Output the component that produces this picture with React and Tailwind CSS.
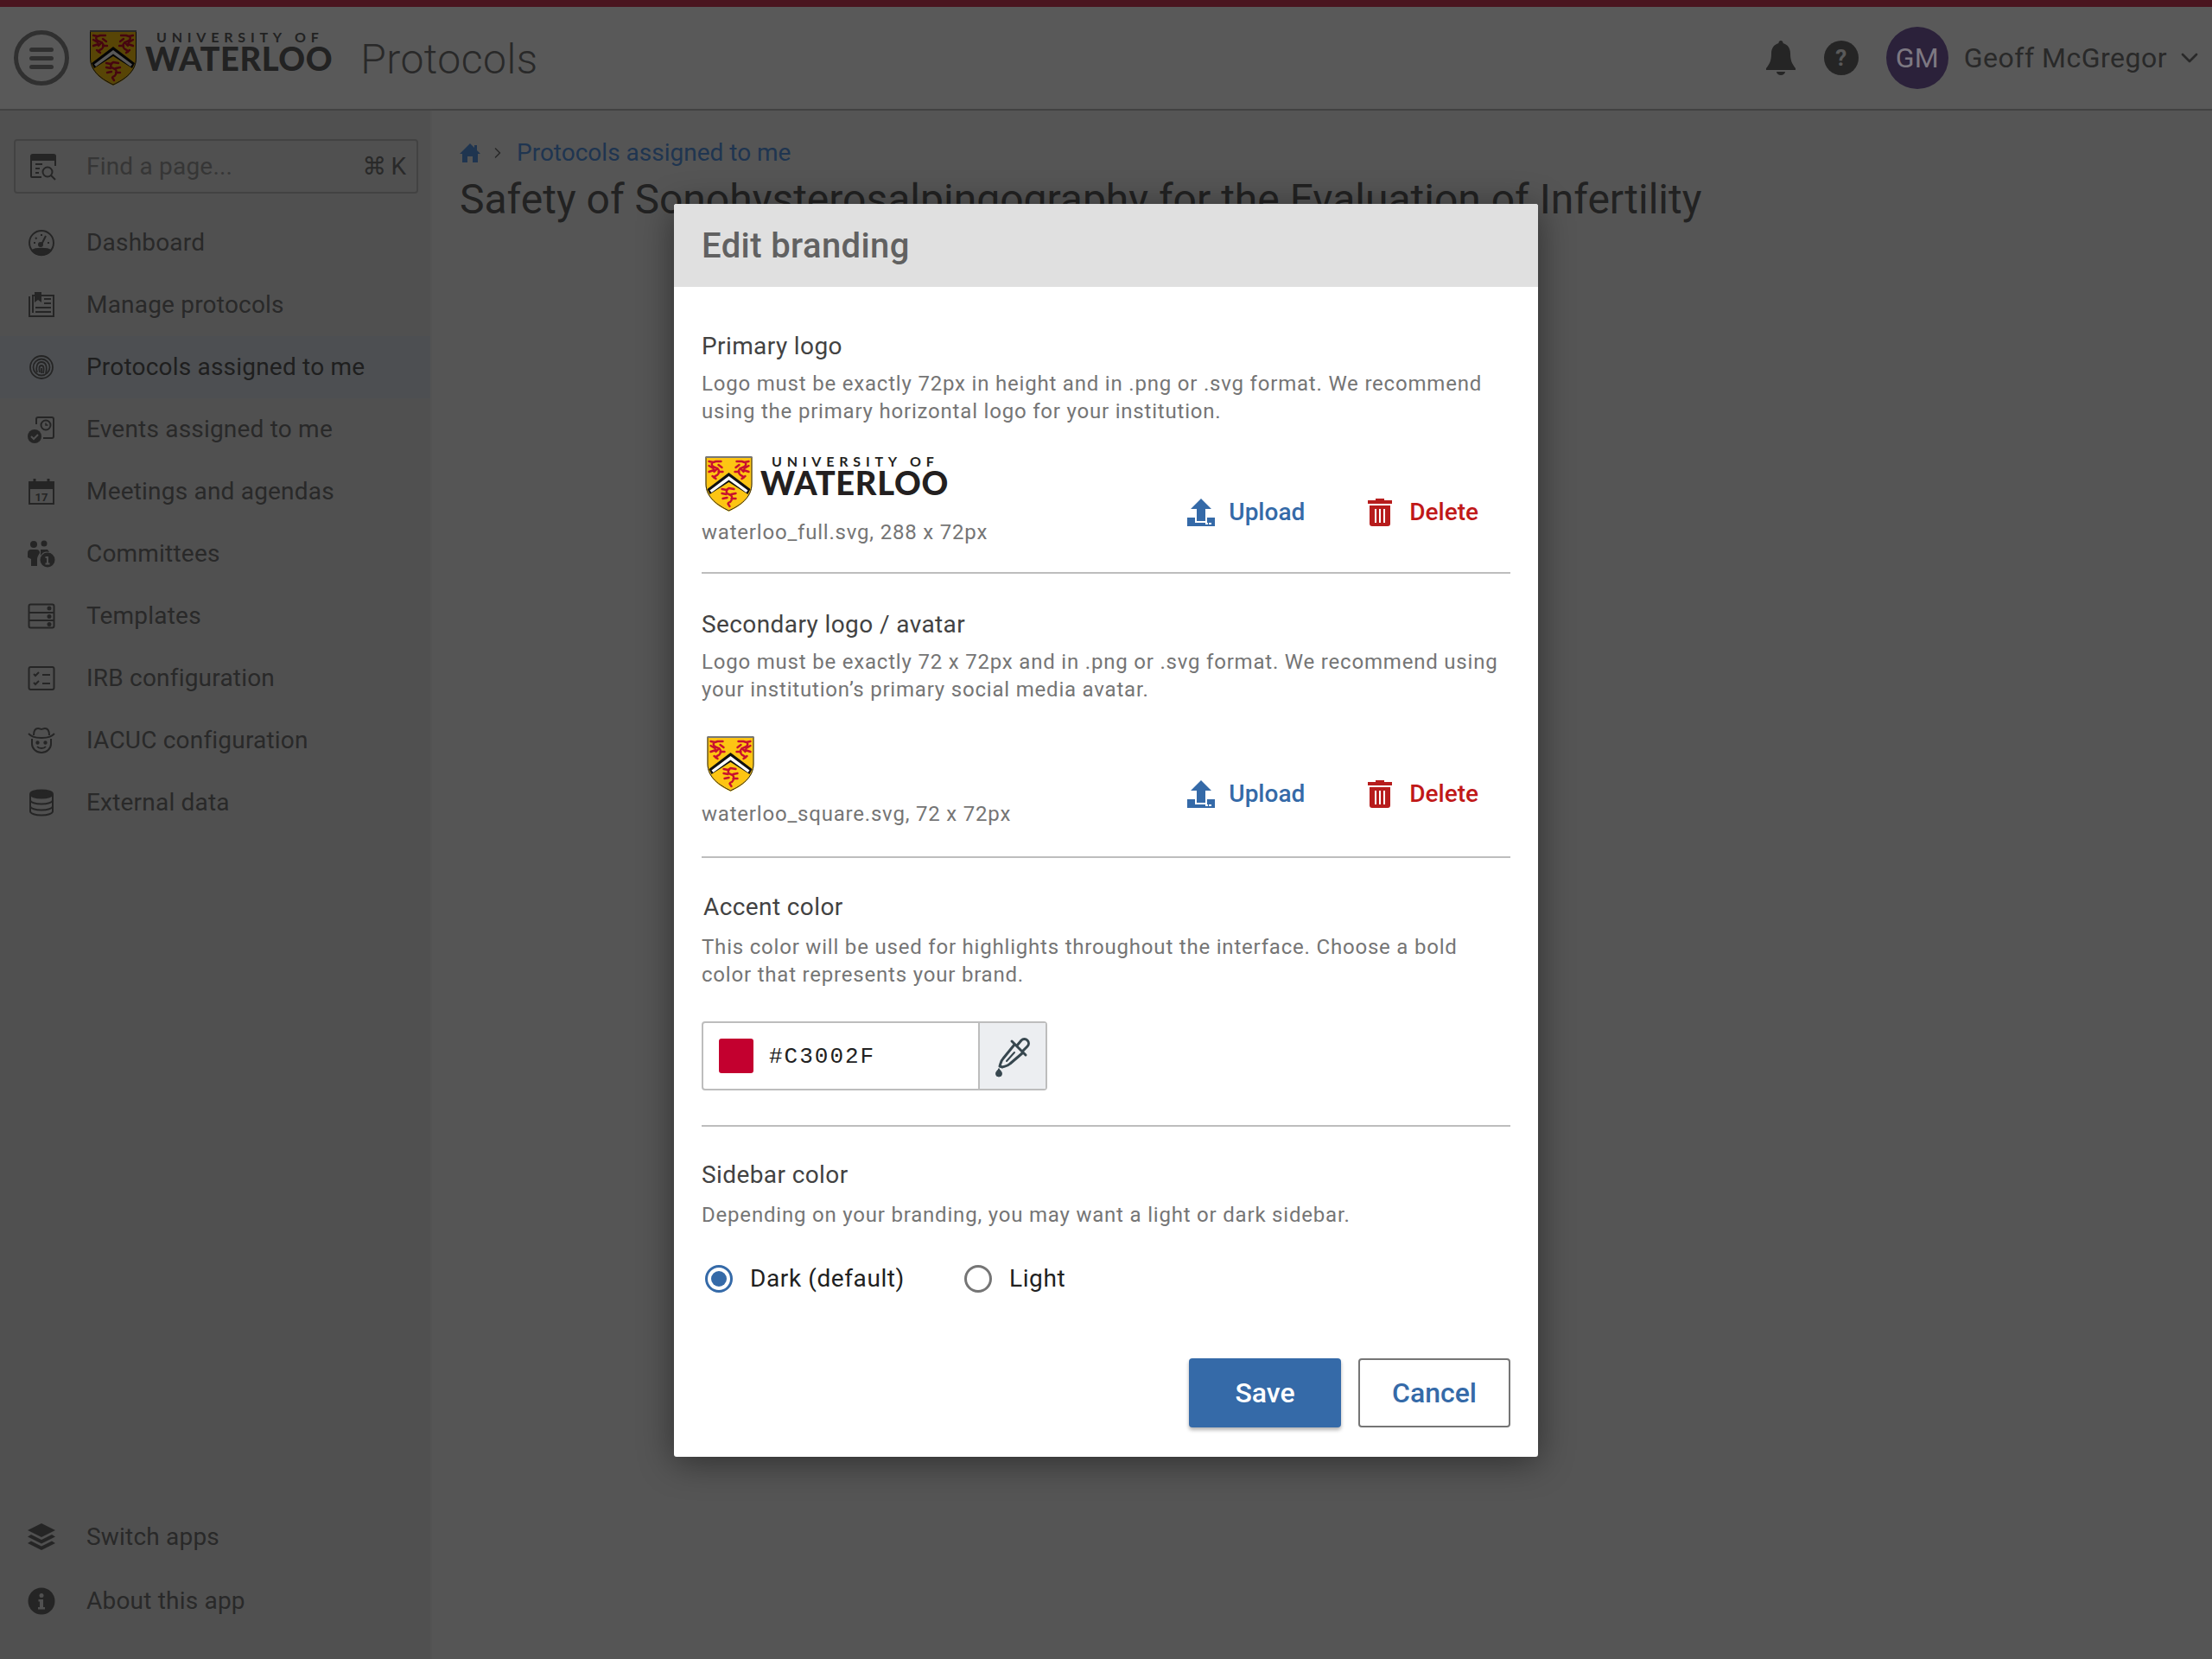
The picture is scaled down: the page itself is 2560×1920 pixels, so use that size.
import { ChevronDown, ChevronRight } from 'lucide-react';

// Crest, drawn on a 54x64 box
function Shield({ className }) {
  return (
    <svg viewBox="0 0 54 64" className={className}>
      <path d="M0 1h54v31c0 16-14 26-27 32C14 58 0 48 0 32z" fill="#fdc513" />
      <path d="M0.500 1v31c0 16 14 25 26.500 31 13-6 26.500-15 26.500-31V1" fill="none" stroke="#222" strokeWidth="1" />
      <path d="M0 1h54" stroke="#777" strokeWidth="2" />
      <g fill="none" stroke="#c8102e" strokeWidth="2.400" strokeLinecap="round" strokeLinejoin="round">
        <path d="M4 6l5 1 3-1 6 0M8 7c-2 3 0 5 3 6s6 3 4 7-4 1-5 5M4 11l5 3M4 18l6-2M15 10l4 3M20 18l-5 0M8 23l4 3M14 14l-4 4" />
        <path d="M50 6l-5 1-3-1-6 0M46 7c2 3 0 5-3 6s-6 3-4 7 4 1 5 5M50 11l-5 3M50 18l-6-2M39 10l-4 3M34 18l5 0M46 23l-4 3M40 14l4 4" />
        <path d="M19 38l5 1 3-2 6 1M26 38c-3 3-2 5 1 6s5 3 3 7-3 1-4 4M19 43l5 1M35 43l-5 1M20 49l5-1M35 49l-5 0M26 55l2 3" />
      </g>
      <path d="M27 19L52 38 49 44 27 30 5 44 2 38z" fill="#111" />
      <path d="M27 23L49 39.500 47 42 27 27.500 7 42 5 39.500z" fill="#fff" />
    </svg>
  );
}

function Wordmark({ shieldClass, topClass, mainClass }) {
  return (
    <div className="flex items-start">
      <Shield className={shieldClass} />
      <div className="flex flex-col">
        <span className={topClass}>UNIVERSITY OF</span>
        <span className={mainClass}>WATERLOO</span>
      </div>
    </div>
  );
}

const iconClass = 'w-8 h-8 shrink-0 text-[#6a6a6a]';

function IconSearchPage() {
  return (
    <svg viewBox="0 0 32 32" className={iconClass} fill="none" stroke="currentColor" strokeWidth="2">
      <path d="M14 28H3a1 1 0 0 1-1-1V4a2 2 0 0 1 2-2h24a2 2 0 0 1 2 2v11" />
      <path d="M2 4h28v4H2z" fill="currentColor" />
      <path d="M7 13h8M7 18h5M7 23h4" />
      <circle cx="21" cy="22" r="5.500" />
      <path d="M25 26l5 5" />
    </svg>
  );
}

function IconGauge() {
  return (
    <svg viewBox="0 0 32 32" className={iconClass} fill="none" stroke="currentColor" strokeWidth="2">
      <circle cx="16" cy="16" r="14" />
      <path d="M5 25a14 14 0 0 0 22 0c-4-3-18-3-22 0z" fill="currentColor" />
      <path d="M21 8l-5 10M7 16h2M25 16h-2M16 6v2M9 10l1.500 1.500" />
      <circle cx="15" cy="18" r="2" fill="currentColor" />
    </svg>
  );
}

function IconNews() {
  return (
    <svg viewBox="0 0 32 32" className={iconClass} fill="none" stroke="currentColor" strokeWidth="2">
      <path d="M2 6v23h28V5H6v20" />
      <path d="M8 1h8v12l-4-3-4 3z" fill="currentColor" stroke="none" />
      <path d="M19 9h8M19 14h8M9 19h18M9 24h18" />
    </svg>
  );
}

function IconFingerprint() {
  return (
    <svg viewBox="0 0 32 32" className={iconClass} fill="none" stroke="currentColor" strokeWidth="1.800">
      <circle cx="16" cy="16" r="13" />
      <circle cx="16" cy="16" r="9.500" />
      <path d="M11 22c-2-6 0-12 5-12s7 5 5 13" />
      <path d="M14 22c-1-4-1-8 2-8s3 4 2 9" />
      <path d="M16 17v6" />
    </svg>
  );
}

function IconEvents() {
  return (
    <svg viewBox="0 0 32 32" className={iconClass} fill="none" stroke="currentColor" strokeWidth="2">
      <path d="M10 10V4a2 2 0 0 1 2-2h16a2 2 0 0 1 2 2v20a2 2 0 0 1-2 2H18" />
      <circle cx="21" cy="11" r="5.500" />
      <path d="M21 8.500V11h2.500" strokeWidth="1.500" />
      <circle cx="8" cy="24" r="8" fill="currentColor" stroke="none" />
      <path d="M4 24l3 3 5-5" stroke="#e5e5e5" />
    </svg>
  );
}

function IconCalendar() {
  return (
    <svg viewBox="0 0 32 32" className={iconClass} fill="none" stroke="currentColor" strokeWidth="2">
      <path d="M2 5h28v25H2z" />
      <path d="M2 5h28v7H2z" fill="currentColor" />
      <path d="M8 1v6M24 1v6" strokeWidth="3" />
      <text x="16" y="27" textAnchor="middle" fontSize="13" fontWeight="700" fill="currentColor" stroke="none" fontFamily="Roboto, sans-serif">17</text>
    </svg>
  );
}

function IconPeople() {
  return (
    <svg viewBox="0 0 32 32" className={iconClass} fill="currentColor">
      <circle cx="7" cy="5" r="4" />
      <circle cx="19" cy="4" r="3.500" />
      <path d="M0 15a4 4 0 0 1 4-4h6a4 4 0 0 1 4 4c-2 3-3 5-3 7v8H4v-8l-4-2z" />
      <path d="M15 11h8l2 3a9 9 0 0 0-10 4z" />
      <circle cx="23" cy="23" r="8.500" />
      <path d="M22 19h2v9h-2zM20.500 19h3v2h-3zM20.500 26.500h5v2h-5z" fill="#e5e5e5" />
    </svg>
  );
}

function IconTemplates() {
  return (
    <svg viewBox="0 0 32 32" className={iconClass} fill="none" stroke="currentColor" strokeWidth="2">
      <rect x="1.500" y="2.500" width="29" height="27" rx="2" />
      <path d="M1.500 12h29M1.500 21h29" />
      <circle cx="25" cy="7" r="1.500" fill="currentColor" />
      <circle cx="25" cy="16.500" r="1.500" fill="currentColor" />
      <circle cx="25" cy="25.500" r="1.500" fill="currentColor" />
    </svg>
  );
}

function IconChecklist() {
  return (
    <svg viewBox="0 0 32 32" className={iconClass} fill="none" stroke="currentColor" strokeWidth="2">
      <rect x="1.500" y="3" width="29" height="26" rx="2" />
      <path d="M7 11l2 2 4-4M7 21l2 2 4-4M17 12h9M17 22h9" />
    </svg>
  );
}

function IconCowboy() {
  return (
    <svg viewBox="0 0 32 32" className={iconClass} fill="none" stroke="currentColor" strokeWidth="2">
      <path d="M5 14v6a11 10 0 0 0 22 0v-6" />
      <path d="M1 8c3 3 6 5 15 5s12-2 15-5" />
      <path d="M7 10c0-5 2-8 5-8 2 0 3 1 4 1s2-1 4-1c3 0 5 3 5 8" />
      <circle cx="11.500" cy="18.500" r="1.200" fill="currentColor" />
      <circle cx="20.500" cy="18.500" r="1.200" fill="currentColor" />
      <path d="M11 23c2 2.500 8 2.500 10 0" />
    </svg>
  );
}

function IconDatabase() {
  return (
    <svg viewBox="0 0 32 32" className={iconClass} fill="none" stroke="currentColor" strokeWidth="2">
      <ellipse cx="16" cy="6" rx="13" ry="4.500" fill="currentColor" />
      <path d="M3 6v20c0 2.500 6 4.500 13 4.500S29 28.500 29 26V6" />
      <path d="M3 13c0 2.500 6 4.500 13 4.500S29 15.500 29 13M3 20c0 2.500 6 4.500 13 4.500S29 22.500 29 20" />
    </svg>
  );
}

function IconLayers() {
  return (
    <svg viewBox="0 0 32 32" className={iconClass} fill="currentColor">
      <path d="M16 0l16 8-16 8L0 8z" />
      <path d="M4 13l12 6 12-6 4 2.500-16 8-16-8z" />
      <path d="M4 20.500l12 6 12-6 4 2.500-16 8-16-8z" />
    </svg>
  );
}

function IconInfo() {
  return (
    <svg viewBox="0 0 32 32" className={iconClass}>
      <circle cx="16" cy="16" r="15.500" fill="currentColor" />
      <circle cx="16" cy="9.500" r="2.500" fill="#e5e5e5" />
      <path d="M12.500 14h5.500v9h2v2.500h-8V23h2v-6.500h-1.500z" fill="#e5e5e5" />
    </svg>
  );
}

function IconUpload() {
  return (
    <svg viewBox="0 0 32 32" className="w-8 h-8 shrink-0 text-[#356aa8]" fill="currentColor">
      <path d="M16 0l12 12h-7v14H11V12H4z" />
      <path d="M0 22h9v6h14v-6h9v10H0z" />
      <path d="M21 28h3v2h-3zM25 28h3v2h-3z" fill="#fff" />
    </svg>
  );
}

function IconTrash() {
  return (
    <svg viewBox="0 0 28 32" className="w-7 h-8 shrink-0 text-[#b71c1c]" fill="currentColor">
      <path d="M9 0h10v2h9v4H0V2h9z" />
      <path d="M2 8h24v21a3 3 0 0 1-3 3H5a3 3 0 0 1-3-3z" />
      <path d="M8 12h2v16H8zM13 12h2v16h-2zM18 12h2v16h-2z" fill="#fff" />
    </svg>
  );
}

function IconDropper() {
  return (
    <svg viewBox="0 0 64 64" className="w-16 h-16 text-[#37474f]" fill="none" stroke="currentColor" strokeWidth="3" strokeLinecap="round" strokeLinejoin="round">
      <path d="M31 15l16 16" />
      <path d="M37 20l5-6a4.500 4.500 0 0 1 7 7l-5 5" />
      <path d="M34 19L21 35c-3 3-3 6-4 9l3 1c3-1 6-1 9-4l14-12" />
      <path d="M25 38l9-10" strokeWidth="2" />
      <path d="M16 47c2 2 3.500 4 3.500 5.500a3.500 3.500 0 0 1-7 0c0-1.500 1.500-3.500 3.500-5.500z" fill="currentColor" strokeWidth="1" />
    </svg>
  );
}

const navItems = [
  { label: 'Dashboard', Icon: IconGauge },
  { label: 'Manage protocols', Icon: IconNews },
  { label: 'Protocols assigned to me', Icon: IconFingerprint, active: true },
  { label: 'Events assigned to me', Icon: IconEvents },
  { label: 'Meetings and agendas', Icon: IconCalendar },
  { label: 'Committees', Icon: IconPeople },
  { label: 'Templates', Icon: IconTemplates },
  { label: 'IRB configuration', Icon: IconChecklist },
  { label: 'IACUC configuration', Icon: IconCowboy },
  { label: 'External data', Icon: IconDatabase },
];

function NavItem({ label, Icon, active, rowClass = 'h-[72px]' }) {
  return (
    <div className={`flex items-center pl-8 gap-[36px] ${rowClass} ${active ? 'bg-[#dce3ea]' : ''}`}>
      <Icon />
      <span className={`text-[28px] tracking-[0.2px] ${active ? 'text-[#5a5a5a]' : 'text-[#757575]'}`}>{label}</span>
    </div>
  );
}

function Header() {
  return (
    <header className="h-[120px] bg-white border-b-2 border-[#bdbdbd] flex items-center shrink-0">
      <div className="ml-4 w-16 h-16 rounded-full border-[5px] border-[#8a8a8a] flex flex-col items-center justify-center gap-[5px]">
        <span className="w-7 h-[5px] rounded bg-[#8a8a8a]" />
        <span className="w-7 h-[5px] rounded bg-[#8a8a8a]" />
        <span className="w-7 h-[5px] rounded bg-[#8a8a8a]" />
      </div>
      <div className="ml-6">
        <Wordmark
          shieldClass="w-[54px] h-16"
          topClass="ml-[23px] text-[16px] leading-[16px] font-bold tracking-[5.800px] text-[#616161] font-['Lato',sans-serif]"
          mainClass="ml-[10px] text-[38px] leading-[32px] font-black tracking-[0.600px] text-[#616161] font-['Lato',sans-serif]"
        />
      </div>
      <span className="ml-[32px] mt-[4px] text-[48px] font-light tracking-[0.500px] text-[#757575]">Protocols</span>
      <div className="ml-auto flex items-center">
        <svg viewBox="0 0 36 40" className="w-9 h-10 text-[#6a6a6a]" fill="currentColor">
          <path d="M18 0a2.500 2.500 0 0 1 2.500 3C26 4.500 29 9 29 15c0 8 2 12 6 17v2H1v-2c4-5 6-9 6-17C7 9 10 4.500 15.500 3A2.500 2.500 0 0 1 18 0z" />
          <path d="M13 36h10a5 4 0 0 1-10 0z" />
        </svg>
        <div className="ml-8 w-10 h-10 rounded-full bg-[#6a6a6a] flex items-center justify-center text-white text-[26px] font-bold">?</div>
        <div className="ml-8 w-[72px] h-[72px] rounded-full bg-[#7b5ea7] flex items-center justify-center">
          <span className="relative z-10 text-[#7d7882] text-[32px]">GM</span>
        </div>
        <span className="ml-[18px] text-[32px] tracking-[0.500px] text-[#757575]">Geoff McGregor</span>
        <ChevronDown className="ml-[10px] mr-[10px] w-8 h-8 text-[#757575]" strokeWidth={2} />
      </div>
    </header>
  );
}

function Sidebar() {
  return (
    <aside className="w-[500px] shrink-0 bg-[#e5e5e5] border-r-2 border-[#eeeeee] flex flex-col pt-[33px] pb-[30px]">
      <div className="ml-4 mr-[14px] h-[63px] rounded border-2 border-[#bdbdbd] flex items-center pl-4 pr-3 shrink-0">
        <IconSearchPage />
        <span className="ml-[34px] text-[28px] tracking-[0.2px] text-[#9a9a9a]">Find a page...</span>
        <span className="ml-auto flex items-center gap-[5px] text-[28px] text-[#757575]">
          <span className="font-['DejaVu_Sans',sans-serif]">⌘</span>K
        </span>
      </div>
      <nav className="mt-[21px] flex flex-col">
        {navItems.map((item) => (
          <NavItem key={item.label} {...item} />
        ))}
      </nav>
      <div className="mt-auto flex flex-col">
        <NavItem label="Switch apps" Icon={IconLayers} rowClass="h-[74px]" />
        <NavItem label="About this app" Icon={IconInfo} rowClass="h-[74px]" />
      </div>
    </aside>
  );
}

function Section({ title, children, titleClass = '', descClass = 'mt-[9px]' }) {
  return (
    <div>
      <div className={`text-[28px] leading-[36px] tracking-[0.4px] text-[#424242] ${titleClass}`}>{title}</div>
      <div className={`text-[24px] leading-[32px] tracking-[0.8px] text-[#757575] ${descClass}`}>{children}</div>
    </div>
  );
}

function FileRow({ logo, filename, logoHeight, actionsClass }) {
  return (
    <div className="flex justify-between items-start">
      <div className="flex flex-col">
        <div className={logoHeight}>{logo}</div>
        <div className="text-[24px] leading-[32px] tracking-[0.8px] text-[#757575]">{filename}</div>
      </div>
      <div className={`flex items-center ${actionsClass}`}>
        <IconUpload />
        <span className="ml-4 text-[28px] font-medium text-[#356aa8]">Upload</span>
        <span className="ml-[73px]"><IconTrash /></span>
        <span className="ml-[20px] mr-[37px] text-[28px] font-medium text-[#c01818]">Delete</span>
      </div>
    </div>
  );
}

function Radio({ checked, label }) {
  return (
    <div className="flex items-center gap-[20px]">
      <span className={`w-8 h-8 rounded-full border-[3px] bg-white flex items-center justify-center ${checked ? 'border-[#356aa8]' : 'border-[#757575]'}`}>
        {checked && <span className="w-[18px] h-[18px] rounded-full bg-[#356aa8]" />}
      </span>
      <span className="text-[28px] tracking-[0.6px] text-[#212121]">{label}</span>
    </div>
  );
}

function BrandingModal() {
  return (
    <div className="w-[1000px] h-[1450px] bg-white rounded-[3px] shadow-[0_6px_40px_rgba(0,0,0,0.45)] flex flex-col">
      <div className="h-[96px] bg-[#e0e0e0] flex items-center px-8 pt-[2px] rounded-t-[3px] shrink-0">
        <h2 className="text-[40px] tracking-[0.4px] font-medium text-[#616161]">Edit branding</h2>
      </div>
      <div className="px-8 pt-[51px] flex flex-col">
        <Section title="Primary logo">
          Logo must be exactly 72px in height and in .png or .svg format. We recommend<br />
          using the primary horizontal logo for your institution.
        </Section>
        <div className="mt-[31px]">
          <FileRow
            logoHeight="h-[77px] pt-[5px]"
            actionsClass="mt-[49px]"
            filename="waterloo_full.svg, 288 x 72px"
            logo={
              <Wordmark
                shieldClass="ml-1 w-[55px] h-[64px]"
                topClass="ml-[22px] -mt-[2px] text-[16px] leading-[16px] font-bold tracking-[5.800px] text-[#231f20] font-['Lato',sans-serif]"
                mainClass="ml-[9px] text-[38px] leading-[32px] font-black tracking-[0.700px] text-[#231f20] font-['Lato',sans-serif]"
              />
            }
          />
        </div>
        <hr className="mt-[30px] border-t-2 border-[#bdbdbd]" />
        <div className="mt-[41px]">
          <Section title="Secondary logo / avatar">
            Logo must be exactly 72 x 72px and in .png or .svg format. We recommend using<br />
            your institution’s primary social media avatar.
          </Section>
        </div>
        <div className="mt-[38px]">
          <FileRow
            logoHeight="h-[74px]"
            actionsClass="mt-[46px]"
            filename="waterloo_square.svg, 72 x 72px"
            logo={<Shield className="ml-[6px] w-[55px] h-[64px]" />}
          />
        </div>
        <hr className="mt-[33px] border-t-2 border-[#bdbdbd]" />
        <div className="mt-[39px]">
          <Section title="Accent color" titleClass="ml-[2px]" descClass="mt-[12px]">
            This color will be used for highlights throughout the interface. Choose a bold<br />
            color that represents your brand.
          </Section>
        </div>
        <div className="mt-[38px] w-[400px] h-[80px] rounded border-2 border-[#bdbdbd] flex">
          <div className="flex-1 flex items-center pl-[18px]">
            <span className="w-10 h-10 rounded-[3px] bg-[#c3002f]" />
            <span className="ml-[18px] pt-[3px] text-[26px] tracking-[2px] text-[#212121] font-['Liberation_Mono',monospace]">#C3002F</span>
          </div>
          <div className="w-[78px] border-l-2 border-[#bdbdbd] bg-[#eceef1] flex items-center justify-center">
            <IconDropper />
          </div>
        </div>
        <hr className="mt-[40px] border-t-2 border-[#bdbdbd]" />
        <div className="mt-[38px]">
          <Section title="Sidebar color" descClass="mt-[12px]">
            Depending on your branding, you may want a light or dark sidebar.
          </Section>
        </div>
        <div className="mt-[37px] ml-[4px] flex gap-[69px]">
          <Radio checked label="Dark (default)" />
          <Radio label="Light" />
        </div>
        <div className="mt-[71px] flex justify-end gap-5">
          <button className="w-[176px] h-[80px] rounded bg-[#356aa8] text-white text-[32px] font-medium shadow-[0_3px_4px_rgba(0,0,0,0.3)]">Save</button>
          <button className="w-[176px] h-[80px] rounded border-2 border-[#757575] bg-white text-[#356aa8] text-[32px] font-medium">Cancel</button>
        </div>
      </div>
    </div>
  );
}

export default function App() {
  return (
    <div className="relative w-[2560px] h-[1920px] overflow-hidden bg-[#f3f3f3] font-['Roboto',sans-serif] flex flex-col">
      <div className="h-2 bg-[#d33c5b] shrink-0" />
      <Header />
      <div className="flex-1 flex min-h-0">
        <Sidebar />
        <main className="flex-1 pl-8 pt-[28px]">
          <div className="flex items-center">
            <svg viewBox="0 0 24 24" className="w-6 h-6 text-[#5b97e6]" fill="currentColor">
              <path d="M12 1l5 5V3h3v6l4 4h-3v10h-6v-7H9v7H3V13H0z" />
            </svg>
            <ChevronRight className="ml-[10px] w-5 h-5 text-[#757575]" />
            <span className="ml-[12px] text-[28px] text-[#5b97e6]">Protocols assigned to me</span>
          </div>
          <h1 className="mt-[5px] text-[48px] leading-[56px] text-[#616161]">
            Safety of Sonohysterosalpingography for the Evaluation of Infertility
          </h1>
        </main>
      </div>
      {/* dimmed backdrop and dialog */}
      <div className="absolute inset-0 bg-black/65 flex justify-center items-start pt-[236px]">
        <BrandingModal />
      </div>
    </div>
  );
}
